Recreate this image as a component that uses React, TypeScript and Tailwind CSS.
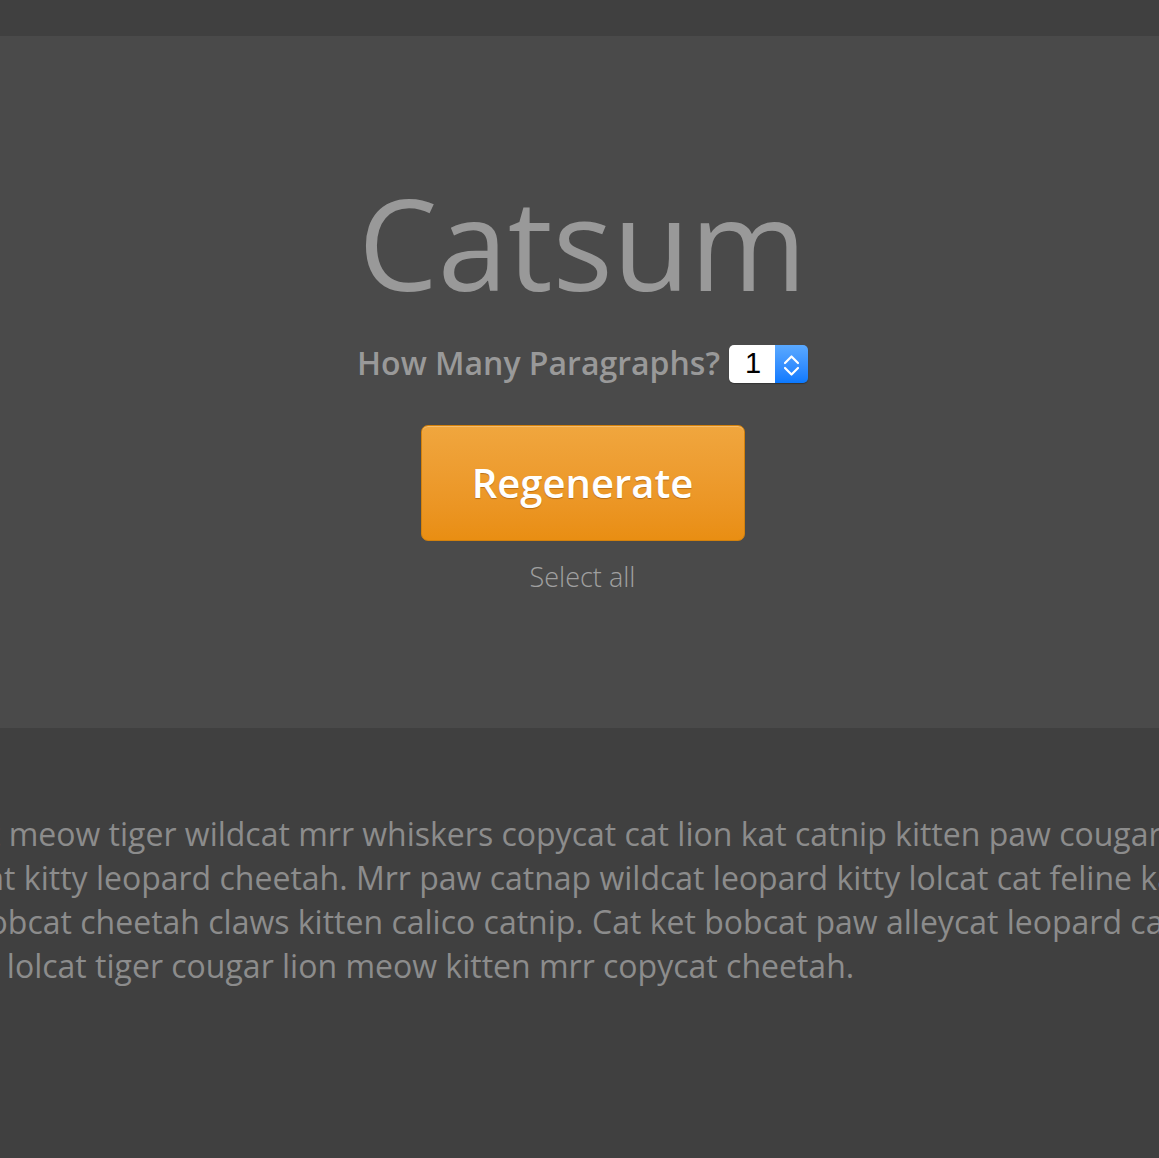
import React from "react";

const lines = [
  { text: "Cat meow tiger wildcat mrr whiskers copycat cat lion kat catnip kitten paw cougar lion", cls: "-ml-[49px]" },
  { text: "cat kitty leopard cheetah. Mrr paw catnap wildcat leopard kitty lolcat cat feline kat", cls: "-ml-[29px]" },
  { text: "bobcat cheetah claws kitten calico catnip. Cat ket bobcat paw alleycat leopard cat", cls: "-ml-[31px]" },
  { text: "cat lolcat tiger cougar lion meow kitten mrr copycat cheetah.", cls: "-ml-[46px]" },
];

export default function App() {
  return (
    <div className="min-h-[1158px] bg-[#404040] font-['Open_Sans',sans-serif] overflow-hidden">
      <div className="h-[36px] bg-[#404040]" />
      <section className="h-[692px] bg-[#4a4a4a] flex flex-col items-center pl-[6px]">
        <h1 className="mt-[143px] text-[126px] leading-[126px] font-normal text-[#999999]">
          Catsum
        </h1>
        <div className="mt-[38px] flex items-center gap-[9px]">
          <span className="text-[32px] leading-[40px] font-semibold text-[#999999]">
            How Many Paragraphs?
          </span>
          <div className="mt-[2px] flex h-[38px] w-[79px] rounded-[5px] overflow-hidden shadow-[0_1px_1px_rgba(0,0,0,0.3)]">
            <div className="flex-1 bg-white flex items-center pl-[16px] text-[29px] text-black font-['Liberation_Sans',sans-serif]">
              1
            </div>
            <div className="w-[33px] bg-gradient-to-b from-[#5aa9ff] to-[#0a79ff] flex items-center justify-center">
              <svg width="19" height="38" viewBox="0 0 19 38" fill="none" stroke="white" strokeWidth="2.2" strokeLinecap="round" strokeLinejoin="round">
                <path d="M3 18 L9.5 11.5 L16 18" />
                <path d="M3 23 L9.5 29.5 L16 23" />
              </svg>
            </div>
          </div>
        </div>
        <button className="mt-[42px] w-[324px] h-[116px] rounded-[7px] border border-[#d3810c] bg-gradient-to-b from-[#f0a63e] to-[#e98e12] shadow-[inset_0_1px_0_rgba(255,255,255,0.25)] text-white text-[40px] font-semibold [text-shadow:0_1px_1px_rgba(120,60,0,0.45)]">
          Regenerate
        </button>
        <div className="mt-[16px] text-[27px] font-light text-[#a0a0a0]">Select all</div>
      </section>
      <section className="pt-[84px] pb-[40px]">
        <div className="text-[32px] leading-[44px] text-[#8c8c8c] whitespace-nowrap">
          {lines.map((l, i) => (
            <div key={i} className={l.cls}>
              {l.text}
            </div>
          ))}
        </div>
      </section>
    </div>
  );
}
